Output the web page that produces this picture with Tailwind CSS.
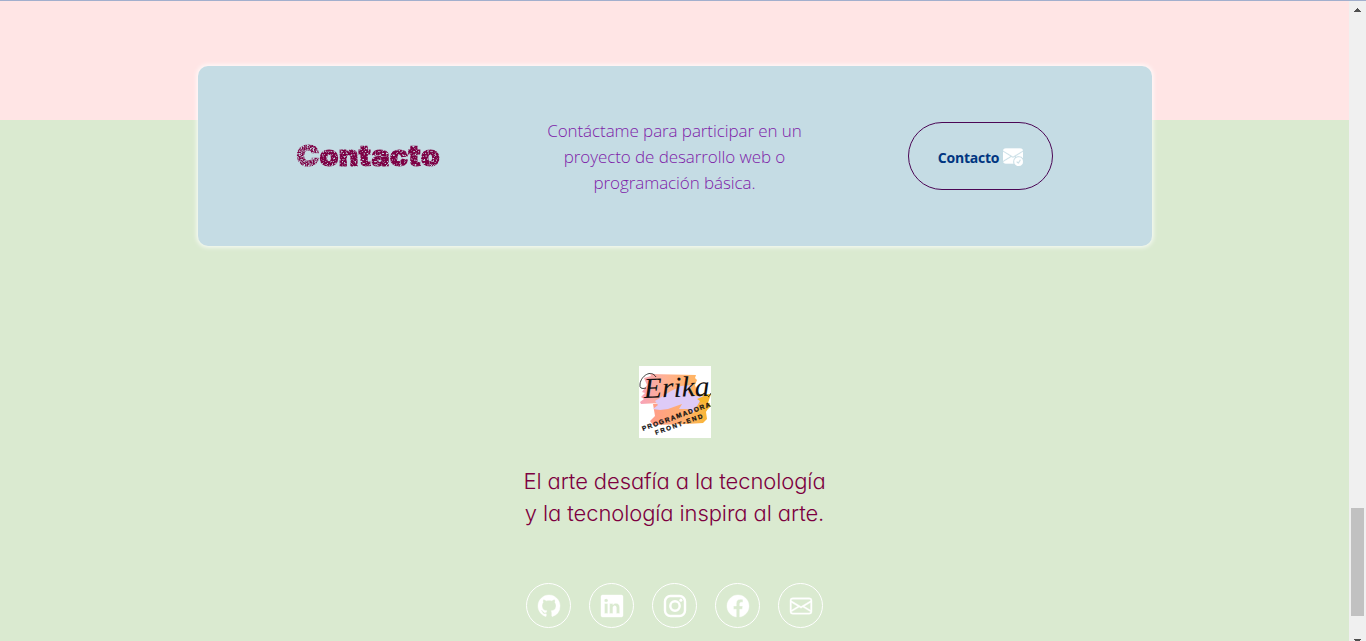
<!DOCTYPE html>
<html lang="es">
<head>
<meta charset="utf-8">
<title>Contacto</title>
<script src="https://cdn.jsdelivr.net/npm/@tailwindcss/browser@4"></script>
</head>
<body class="relative flex h-[641px] overflow-hidden bg-[#daead0]">
<svg class="absolute h-0 w-0" aria-hidden="true">
  <filter id="dirt" x="0" y="0" width="100%" height="100%" color-interpolation-filters="sRGB">
    <feTurbulence type="fractalNoise" baseFrequency="0.6" numOctaves="2" seed="7" result="n"/>
    <feColorMatrix in="n" type="matrix" values="0 0 0 0 0  0 0 0 0 0  0 0 0 0 0  0 0 0 4 -0.95" result="m"/>
    <feComposite in="SourceGraphic" in2="m" operator="in"/>
  </filter>
  <filter id="dirtier" x="0" y="0" width="100%" height="100%" color-interpolation-filters="sRGB">
    <feTurbulence type="fractalNoise" baseFrequency="0.7" numOctaves="2" seed="3" result="n"/>
    <feColorMatrix in="n" type="matrix" values="0 0 0 0 0  0 0 0 0 0  0 0 0 0 0  0 0 0 3 -0.85" result="m"/>
    <feComposite in="SourceGraphic" in2="m" operator="in"/>
  </filter>
</svg>
<div class="flex w-[1349px] flex-col border-t border-[#a2afcd]">
  <section class="h-[119px] shrink-0 bg-[#ffe5e5]"></section>
  <footer class="flex flex-col items-center">
    <div class="-mt-[54px] grid h-[180px] w-[954px] grid-cols-3 items-center justify-items-center rounded-[10px] bg-[#c5dce4] px-[18px] shadow-[0_0_5px_1px_rgba(255,255,255,0.9)]">
      <h2 class="scale-x-[1.085] whitespace-nowrap font-['Inter'] text-[28px] leading-[36px] font-black tracking-[0.3px] text-[#7d0045] [-webkit-text-stroke:1.2px_#7d0045]"><span class="inline-block [filter:url(#dirtier)]">C</span><span class="inline-block [filter:url(#dirt)]">ontacto</span></h2>
      <p class="mt-[2px] text-center font-['Open_Sans'] text-[17px] leading-[26px] font-[350] tracking-[-0.08px] whitespace-nowrap text-[#7d22a8]">Contáctame para participar en un<br>proyecto de desarrollo web o<br>programación básica.</p>
      <a class="flex h-[68px] w-[145px] items-center justify-center gap-1 rounded-[34px] border border-[#4b0755] font-['Open_Sans'] text-[14px] font-bold tracking-[-0.25px] text-[#003580]"><span class="mt-[3px]">Contacto</span>
        <svg class="h-5 w-5" viewBox="0 0 16 16" fill="#fff"><path d="M.05 3.555A2 2 0 0 1 2 2h12a2 2 0 0 1 1.95 1.555L8 8.414.05 3.555ZM0 4.697v7.104l5.803-3.558L0 4.697ZM6.761 8.83l-6.57 4.026A2 2 0 0 0 2 14h6.256A4.493 4.493 0 0 1 8 12.5a4.49 4.49 0 0 1 1.606-3.446l-.367-.225L8 9.586l-1.239-.757ZM16 4.697v4.974A4.491 4.491 0 0 0 12.5 8a4.49 4.49 0 0 0-1.965.45l-.338-.207L16 4.697Z" stroke="#fff" stroke-width=".3"/><path d="M16 12.5a3.5 3.5 0 1 1-7 0 3.5 3.5 0 0 1 7 0Zm-1.993-1.679a.5.5 0 0 0-.686.172l-1.17 1.95-.547-.547a.5.5 0 0 0-.708.708l.774.773a.75.75 0 0 0 1.174-.144l1.335-2.226a.5.5 0 0 0-.172-.686Z" stroke="#fff" stroke-width=".3"/></svg>
      </a>
    </div>
    <svg class="mt-[120px] h-[72px] w-[72px] bg-white" viewBox="0 0 72 72">
      <defs>
        <linearGradient id="top" x1="0" x2="1"><stop offset="0" stop-color="#f7a3b8"/><stop offset=".45" stop-color="#ffb192"/><stop offset="1" stop-color="#ffb45f"/></linearGradient>
        <linearGradient id="low" x1="0" x2="1"><stop offset="0" stop-color="#ff9c8b"/><stop offset=".6" stop-color="#ffb16d"/><stop offset="1" stop-color="#f8b62c"/></linearGradient>
      </defs>
      <path fill="url(#top)" d="M5 12l7-2-1-2 46 1-1 3 2 2-2 5 2 6 0 6-8 2-30 4-18 1-1-2 4-3-3-2 4-4-3-1 5-7z"/>
      <path fill="#f8b62c" d="M51 29l21-1-3 9 3 3-6 6-17 1z"/>
      <path fill="url(#low)" d="M14 38l34-3 23 2-4 9 1 7-4 4-16 1-34 1-3-4 5-5z"/>
      <path fill="#decbf7" d="M16 35l16-10 10-5 11-1-4 8 9 3 7 0-7 3 3 2-7 12-6-4-8 0 3-5-14 5-8 1-7-1 5-4z"/>
      <text x="5" y="32" class="font-['Liberation_Serif'] text-[29px] italic" textLength="66" lengthAdjust="spacingAndGlyphs" transform="rotate(-2 3 32)" fill="#111">Erika</text>
      <path d="M17 11C12 3 2 10 1 18q-1 6 6 4M69 31q2-1 3-4" fill="none" stroke="#111" stroke-width=".8"/>
      <g class="font-['Liberation_Sans'] font-bold" fill="#111" stroke="#111" stroke-width=".25">
        <text transform="translate(4 65) rotate(-20)" font-size="6.5" textLength="72">PROGRAMADORA</text>
        <text transform="translate(17 69) rotate(-20)" font-size="6.3" textLength="50">FRONT-END</text>
      </g>
    </svg>
    <p class="mt-[27px] text-center font-['Inter'] text-[22px] leading-[32px] font-[350] tracking-[-0.1px] whitespace-nowrap text-[#7d0040] [font-feature-settings:'cv11','ss03']">El arte desafía a la tecnología<br>y la tecnología inspira al arte.</p>
    <nav class="mt-[54px] flex gap-[18px] text-white">
      <a class="flex h-[45px] w-[45px] items-center justify-center rounded-full border border-white"><svg class="h-[22px] w-[22px] overflow-visible" viewBox="0 0 16 16" fill="currentColor" stroke="currentColor" stroke-width=".3"><path d="M8 0C3.58 0 0 3.58 0 8c0 3.54 2.29 6.53 5.47 7.59.4.07.55-.17.55-.38 0-.19-.01-.82-.01-1.49-2.01.37-2.53-.49-2.69-.94-.09-.23-.48-.94-.82-1.13-.28-.15-.68-.52-.01-.53.63-.01 1.08.58 1.23.82.72 1.21 1.87.87 2.33.66.07-.52.28-.87.51-1.07-1.78-.2-3.64-.89-3.64-3.95 0-.87.31-1.59.82-2.15-.08-.2-.36-1.02.08-2.12 0 0 .67-.21 2.2.82.64-.18 1.32-.27 2-.27.68 0 1.36.09 2 .27 1.53-1.04 2.2-.82 2.2-.82.44 1.1.16 1.92.08 2.12.51.56.82 1.27.82 2.15 0 3.07-1.87 3.75-3.65 3.95.29.25.54.73.54 1.48 0 1.07-.01 1.93-.01 2.2 0 .21.15.46.55.38A8.012 8.012 0 0 0 16 8c0-4.42-3.58-8-8-8z"/></svg></a>
      <a class="flex h-[45px] w-[45px] items-center justify-center rounded-full border border-white"><svg class="h-[22px] w-[22px] overflow-visible" viewBox="0 0 16 16" fill="currentColor" stroke="currentColor" stroke-width=".3"><path d="M0 1.146C0 .513.526 0 1.175 0h13.65C15.474 0 16 .513 16 1.146v13.708c0 .633-.526 1.146-1.175 1.146H1.175C.526 16 0 15.487 0 14.854V1.146zm4.943 12.248V6.169H2.542v7.225h2.401zm-1.2-8.212c.837 0 1.358-.554 1.358-1.248-.015-.709-.52-1.248-1.342-1.248-.822 0-1.359.54-1.359 1.248 0 .694.521 1.248 1.327 1.248h.016zm4.908 8.212V9.359c0-.216.016-.432.08-.586.173-.431.568-.878 1.232-.878.869 0 1.216.662 1.216 1.634v3.865h2.401V9.25c0-2.22-1.184-3.252-2.764-3.252-1.274 0-1.845.7-2.165 1.193v.025h-.016a5.54 5.54 0 0 1 .016-.025V6.169h-2.4c.03.678 0 7.225 0 7.225h2.4z"/></svg></a>
      <a class="flex h-[45px] w-[45px] items-center justify-center rounded-full border border-white"><svg class="h-[22px] w-[22px] overflow-visible" viewBox="0 0 16 16"><rect x=".72" y=".72" width="14.56" height="14.56" rx="4" fill="none" stroke="currentColor" stroke-width="1.75"/><circle cx="8" cy="8" r="3.4" fill="none" stroke="currentColor" stroke-width="1.75"/><circle cx="12.27" cy="3.73" r="1.1" fill="currentColor"/></svg></a>
      <a class="flex h-[45px] w-[45px] items-center justify-center rounded-full border border-white"><svg class="h-[22px] w-[22px] overflow-visible" viewBox="0 0 16 16" fill="currentColor" stroke="currentColor" stroke-width=".3"><path d="M16 8.049c0-4.446-3.582-8.05-8-8.05C3.58 0-.002 3.603-.002 8.05c0 4.017 2.926 7.347 6.75 7.951v-5.625h-2.03V8.05H6.75V6.275c0-2.017 1.195-3.131 3.022-3.131.876 0 1.791.157 1.791.157v1.98h-1.009c-.993 0-1.303.621-1.303 1.258v1.51h2.218l-.354 2.326H9.25V16c3.824-.604 6.75-3.934 6.75-7.951z"/></svg></a>
      <a class="flex h-[45px] w-[45px] items-center justify-center rounded-full border border-white"><svg class="h-[22px] w-[22px] overflow-visible" viewBox="0 0 16 16" fill="currentColor" stroke="currentColor" stroke-width=".3"><path d="M0 4a2 2 0 0 1 2-2h12a2 2 0 0 1 2 2v8a2 2 0 0 1-2 2H2a2 2 0 0 1-2-2V4Zm2-1a1 1 0 0 0-1 1v.217l7 4.2 7-4.2V4a1 1 0 0 0-1-1H2Zm13 2.383-4.708 2.825L15 11.105V5.383Zm-.034 6.876-5.64-3.471L8 9.583l-1.326-.795-5.64 3.47A1 1 0 0 0 2 13h12a1 1 0 0 0 .966-.741ZM1 11.105l4.708-2.897L1 5.383v5.722Z"/></svg></a>
    </nav>
  </footer>
</div>
<aside class="flex w-[17px] flex-col items-center border-t border-[#a2afcd] bg-[#f0f0f0]">
  <svg class="mt-[7px] h-1 w-[7px] shrink-0" viewBox="0 0 7 4" fill="#505050" shape-rendering="crispEdges"><path d="M3 0h1v1h1v1h1v1h1v1H0V3h1V2h1V1h1z"/></svg>
  <div class="mt-[496px] h-[108px] w-[13px] shrink-0 bg-[#c1c1c1]"></div>
  <svg class="mt-[23px] h-1 w-[7px] shrink-0" viewBox="0 0 7 4" fill="#505050" shape-rendering="crispEdges"><path d="M0 0h7v1H6v1H5v1H4v1H3V3H2V2H1V1H0z"/></svg>
</aside>
</body>
</html>
